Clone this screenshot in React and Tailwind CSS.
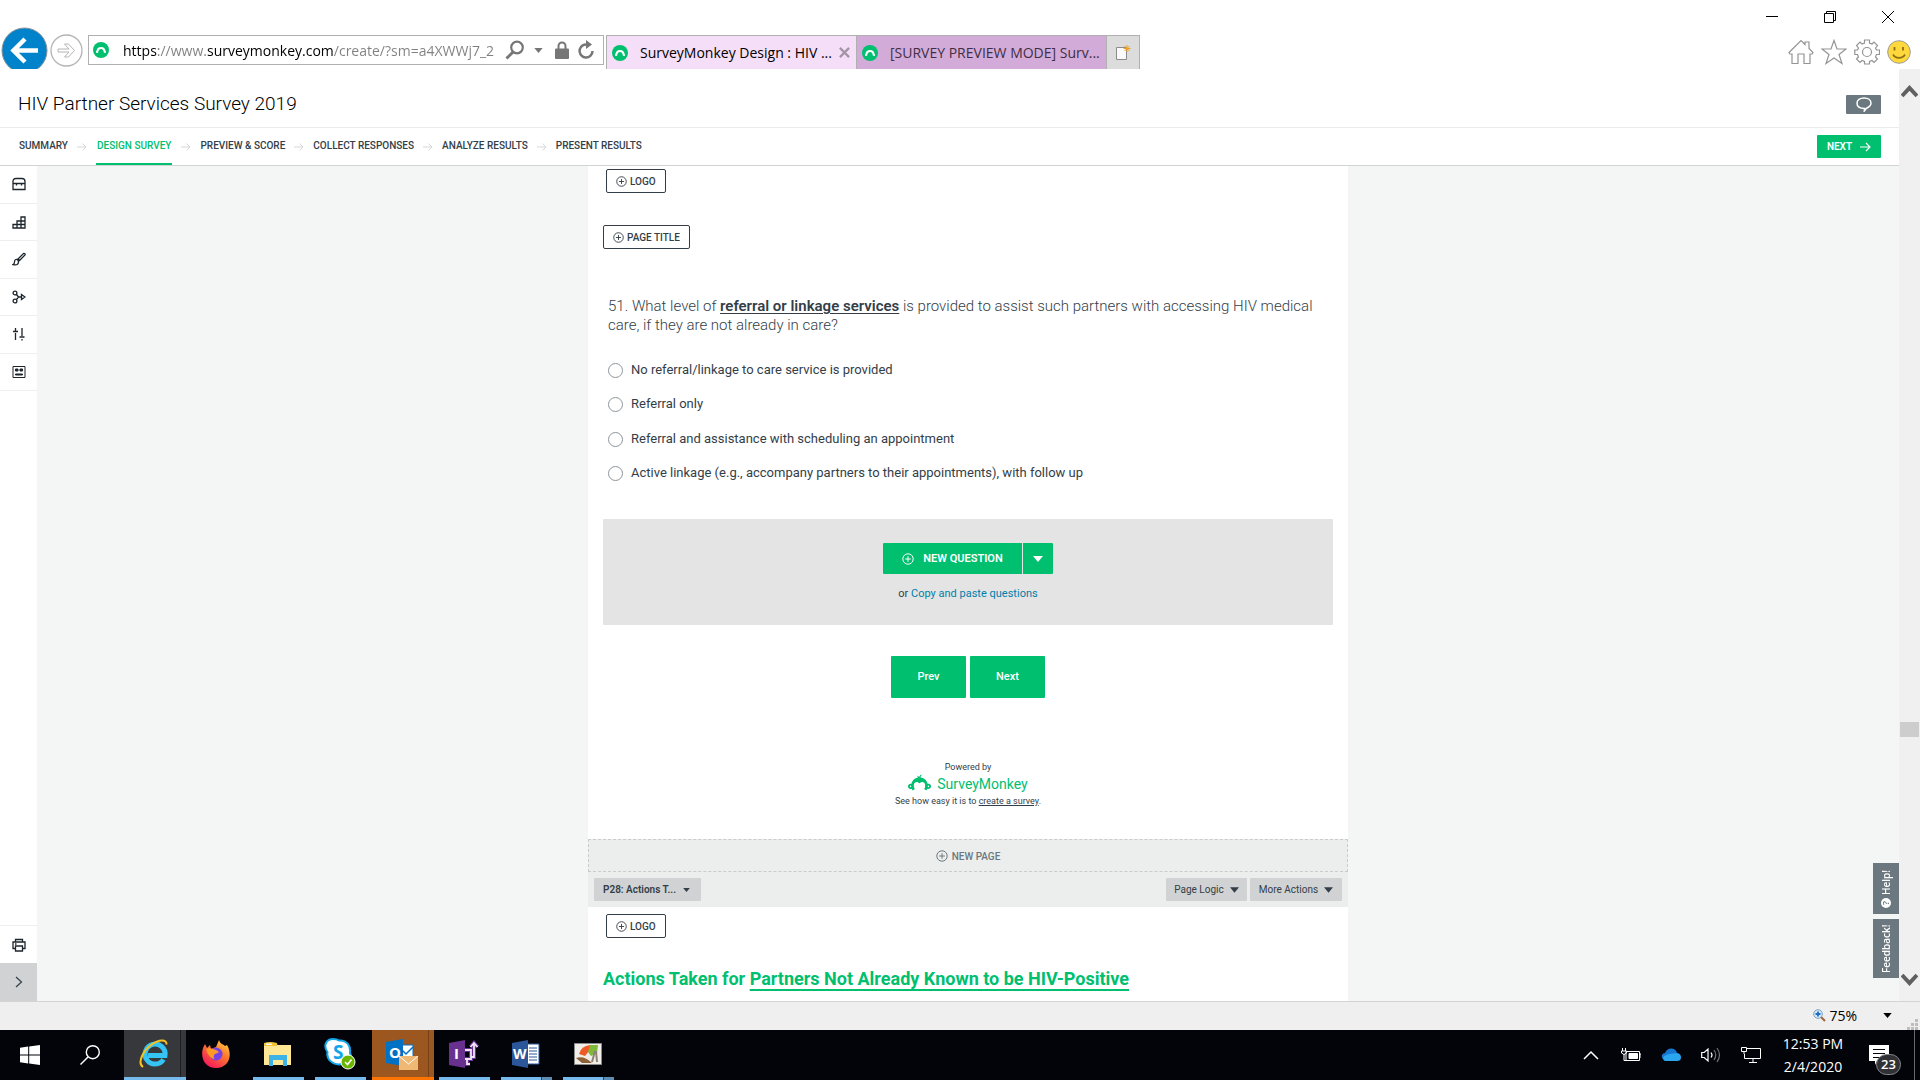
/**
 * Survey designer page, shown inside a desktop browser window.
 */

import React, { useState } from "react";
import { SiSurveymonkey } from "react-icons/si";

const NAV_STEPS = [
  "SUMMARY",
  "DESIGN SURVEY",
  "PREVIEW & SCORE",
  "COLLECT RESPONSES",
  "ANALYZE RESULTS",
  "PRESENT RESULTS",
];

const ANSWERS = [
  "No referral/linkage to care service is provided",
  "Referral only",
  "Referral and assistance with scheduling an appointment",
  "Active linkage (e.g., accompany partners to their appointments), with follow up",
];

/** Green round favicon used in the address bar and tabs. */
function Favicon() {
  return (
    <span className="flex size-4 shrink-0 items-center justify-center rounded-full bg-[#00bf6f] text-white">
      <svg viewBox="0 0 16 16" className="size-4" fill="none" stroke="currentColor" strokeWidth="2">
        <path d="M4.2 10.5C4.6 4.5 11.4 4.5 11.8 10.5" />
        <circle cx="4" cy="10" r="1" fill="currentColor" stroke="none" />
        <circle cx="12" cy="10" r="1" fill="currentColor" stroke="none" />
      </svg>
    </span>
  );
}

function CirclePlus({ className }) {
  return (
    <svg viewBox="0 0 12 12" className={className} fill="none" stroke="currentColor">
      <circle cx="6" cy="6" r="5.2" />
      <path d="M6 3.2v5.6M3.2 6h5.6" />
    </svg>
  );
}

function Caret({ className }) {
  return (
    <svg viewBox="0 0 10 6" className={className} fill="currentColor">
      <path d="M0 0h10L5 6z" />
    </svg>
  );
}

/** Outlined "add" button, e.g. + LOGO. */
function AddButton({ children, className }) {
  return (
    <button
      className={`flex h-6 items-center gap-[3px] rounded-[2px] border border-[#333e48] px-[9px] text-[10px] font-medium ${className}`}
    >
      <CirclePlus className="size-[11px]" />
      {children}
    </button>
  );
}

function BrowserBar() {
  const [url, setUrl] = useState("https://www.surveymonkey.com/create/?sm=a4XWWj7_2");

  return (
    <div className="flex h-[69px] shrink-0 items-end bg-white pl-px font-['Open_Sans',sans-serif]">
      <button aria-label="Back" className="h-[42px] w-[47px] shrink-0 overflow-hidden">
        <svg viewBox="0 0 47 42" className="h-[42px] w-[47px]">
          <circle cx="23.500" cy="23.500" r="22.500" fill="#0083ca" stroke="#8a9299" />
          <path d="M37 23.500H13M24 12 12.500 23.500 24 35" fill="none" stroke="#fff" strokeWidth="4.500" />
        </svg>
      </button>
      <button aria-label="Forward" className="mb-[2px] ml-[2px] size-[33px] shrink-0">
        <svg viewBox="0 0 33 33" fill="none" stroke="#b4b4b4">
          <circle cx="16.500" cy="16.500" r="15.500" strokeWidth="1.300" />
          <path d="M8 15h11l-4.500-5h4l6 6.500-6 6.500h-4l4.500-5H8z" />
        </svg>
      </button>

      {/* Address bar */}
      <div className="mb-1 ml-[5px] flex h-[30px] w-[516px] shrink-0 items-center border border-[#b0b0b0] pl-1 pr-2">
        <Favicon />
        <input
          aria-label="Address"
          value={url}
          onChange={(e) => setUrl(e.target.value)}
          className="ml-[14px] w-[384px] bg-[linear-gradient(90deg,#000_34px,#808080_34px,#808080_84px,#000_84px,#000_211px,#808080_211px)] bg-clip-text text-[14px] text-transparent outline-none"
        />
        <svg viewBox="0 0 20 20" className="size-5 shrink-0" fill="none" stroke="#767676">
          <circle cx="12" cy="7.500" r="5.800" strokeWidth="2.200" />
          <path d="M8 12 1.500 18.500" strokeWidth="3" />
        </svg>
        <Caret className="ml-[9px] h-[5px] w-[9px] shrink-0 text-[#767676]" />
        <svg viewBox="0 0 14 18" className="ml-3 h-[18px] w-[14px] shrink-0" fill="#767676">
          <rect y="7.500" width="14" height="10.500" rx="1" />
          <path d="M3.500 8V5a3.500 3.500 0 0 1 7 0v3" fill="none" stroke="#767676" strokeWidth="2" />
        </svg>
        <svg viewBox="0 0 18 20" className="ml-2 h-5 w-[18px] shrink-0" fill="none" stroke="#767676" strokeWidth="2.500">
          <path d="M11 4.800A6.500 6.500 0 1 0 15.500 11" />
          <path d="M9 0v9l6-4.500z" fill="#767676" stroke="none" />
        </svg>
      </div>

      {/* Tabs */}
      <div className="ml-[2px] flex h-[34px] min-w-0 border-l border-t border-[#b0b0b0] text-[14px]">
        <div className="flex w-[250px] items-center border-r border-[#b0b0b0] bg-[#f5dff8] pl-[5px]">
          <Favicon />
          <span className="ml-[12px] flex-1 whitespace-nowrap text-black">SurveyMonkey Design : HIV ...</span>
          <button aria-label="Close tab" className="mr-[6px]">
            <svg viewBox="0 0 12 12" className="size-[11px]" stroke="#a494a8" strokeWidth="2.500">
              <path d="m1 1 10 10M11 1 1 11" />
            </svg>
          </button>
        </div>
        <div className="flex w-[250px] items-center border-r border-[#b0b0b0] bg-[#d3abd9] pl-[5px]">
          <Favicon />
          <span className="ml-[12px] whitespace-nowrap text-[#402f44]">[SURVEY PREVIEW MODE] Surv...</span>
        </div>
        <button aria-label="New tab" className="flex w-[33px] items-center justify-center border-r border-[#b0b0b0] bg-[#dcdcdc]">
          <svg viewBox="0 0 16 16" className="size-4">
            <path d="M1.500 2.500h10v12h-10z" fill="#fafafa" stroke="#8b8b8b" />
            <path d="M12 0v7M8.500 3.500h7M9.500 1l5 5M14.500 1l-5 5" stroke="#f0a020" />
          </svg>
        </button>
      </div>

      {/* Window controls above the browser tools */}
      <div className="ml-auto flex h-full flex-col justify-between">
        <div className="flex h-9 items-center justify-end gap-[46px] pr-[26px]">
          <button aria-label="Minimize">
            <svg viewBox="0 0 12 12" className="size-3" stroke="#000"><path d="M0 5.500h12" /></svg>
          </button>
          <button aria-label="Restore">
            <svg viewBox="0 0 12 12" className="size-3" fill="none" stroke="#000">
              <path d="M.5 2.500h9v9h-9zM2.500 2.500v-2h9v9h-2" />
            </svg>
          </button>
          <button aria-label="Close">
            <svg viewBox="0 0 12 12" className="size-3" stroke="#000"><path d="m0 0 12 12M12 0 0 12" /></svg>
          </button>
        </div>
        <div className="flex h-9 items-center justify-end gap-[7px] pr-[9px]">
          <button aria-label="Home">
            <svg viewBox="0 0 26 26" className="size-[26px]" fill="none" stroke="#949494" strokeWidth="1.200">
              <path d="M1 13.500 13 1.500l4 4V3h4v6.500l4 4-1 1.500h-2v9.500h-6V15h-6v9.500H4V15H2z" />
            </svg>
          </button>
          <button aria-label="Favorites">
            <svg viewBox="0 0 26 26" className="size-[26px]" fill="none" stroke="#949494" strokeWidth="1.200">
              <path d="m13 1.500 3 8.500h9l-7 5.500 3 9L13 19l-8 5.500 3-9L1 10h9z" />
            </svg>
          </button>
          <button aria-label="Tools">
            <svg viewBox="0 0 26 26" className="size-[26px]" fill="none" stroke="#949494" strokeWidth="1.200">
              <path d="M10.500 1h5v3l2.500 1 2-2 3.500 3.500-2 2.500 1 2h3v4.500h-3l-1 2.500 2 2-3.500 3.500-2-2-2.500 1v2.500h-5V22.500L8 21.500l-2 2L2.500 20l2-2-1-2.500H.8V11h2.700l1-2-2-2.500L6 3l2 2 2.500-1z" />
              <circle cx="13" cy="13" r="4.500" />
            </svg>
          </button>
          <button aria-label="Send a smile">
            <svg viewBox="0 0 24 24" className="size-6" fill="none">
              <circle cx="12" cy="12" r="11.300" fill="#ffd93b" stroke="#9c9c9c" />
              <path d="M7.500 7v3.500M16 7v3.500" stroke="#8a7018" strokeWidth="1.800" />
              <path d="M6 14.500c2.500 4.500 9.500 4.500 12 0" stroke="#8a7018" strokeWidth="1.600" />
            </svg>
          </button>
        </div>
      </div>
    </div>
  );
}

function SurveyHeader() {
  return (
    <header className="shrink-0 bg-white">
      <div className="flex h-[59px] items-center justify-between border-b border-[#ebebeb] pl-[18px] pr-[18px] pt-3">
        <h1 className="text-[19px] font-light leading-6 text-black">HIV Partner Services Survey 2019</h1>
        <button aria-label="Comments" className="flex h-[19px] w-[35px] items-center justify-center rounded-[1px] bg-[#6b787f]">
          <svg viewBox="0 0 16 15" className="h-[15px] w-4" fill="none" stroke="#fff" strokeWidth="1.500">
            <path d="M8.500 11.500C4 11.500 1 9.500 1 6.300 1 3 4 1 8 1s7 2 7 5.200c0 2.500-2 3.800-4.500 5L8.300 14z" />
          </svg>
        </button>
      </div>
      <nav className="flex h-[38px] items-stretch border-b border-[#d0d2d3] pl-[19px] pr-[18px] text-[10px] font-medium">
        {NAV_STEPS.map((step, i) => (
          <React.Fragment key={step}>
            {i > 0 && (
              <svg viewBox="0 0 10 8" className="mx-[9px] h-2 w-[10px] shrink-0 self-center" fill="none" stroke="#d5d7d8">
                <path d="M0 4h9M5.500.5 9 4 5.500 7.500" />
              </svg>
            )}
            {step === "DESIGN SURVEY" ? (
              <a href="#design" className="flex items-center whitespace-nowrap border-b-2 border-[#00bf6f] px-px text-[#00bf6f]">
                {step}
              </a>
            ) : (
              <a href="#step" className="flex items-center whitespace-nowrap pb-[2px]">{step}</a>
            )}
          </React.Fragment>
        ))}
        <button className="ml-auto flex h-[23px] w-16 items-center justify-center gap-2 self-center rounded-[1px] bg-[#00bf6f] font-semibold text-white">
          NEXT
          <svg viewBox="0 0 11 10" className="h-[10px] w-[11px]" fill="none" stroke="currentColor" strokeWidth="1.200">
            <path d="M0 5h10M6 1l4 4-4 4" />
          </svg>
        </button>
      </nav>
    </header>
  );
}

// Tool icons of the left rail, top to bottom
const TOOLS = [
  {
    label: "Question bank",
    icon: <path d="M1 6.500V4.500Q1 1.500 4 1.500h6q3 0 3 3v2M.7 6.500h12.600M1 6.500v6h12v-6M4.500 6.500v2M9.500 6.500v2" />,
  },
  {
    label: "Builder",
    icon: <path d="M1 9.500h12v3.500H1zM5 13V6h8v7M9 13V2h4v4M9 2v4M1 9.500h12" />,
  },
  {
    label: "Appearance",
    icon: <path d="M6 7 11.500 1.500q2-.5 1.500 1.500L7.500 8.500zM5.500 7.500q-3-.5-3 2.500 0 2-1.500 2.500 5.500 1.500 5.500-3z" />,
  },
  {
    label: "Logic",
    icon: (
      <>
        <circle cx="3" cy="3" r="1.900" />
        <circle cx="3" cy="11" r="1.900" />
        <path d="M4.500 4.500 6.500 7h3.500M4.500 9.500l2-2.500M9.500 4.500 13 7 9.500 9.500z" />
      </>
    ),
  },
  {
    label: "Options",
    icon: <path d="M3.500 1v3M1 4.500h5M3.500 6v7M10 1v8M7.500 10h5M10 12v1.500" />,
  },
  {
    label: "Format",
    icon: (
      <>
        <path d="M1 1.500h12v11H1z" strokeWidth="1" />
        <path d="M3.500 4h2.500v2H3.500zM8 4h2.500v2H8zM3.500 9h7v1h-7z" fill="currentColor" strokeWidth="1" />
      </>
    ),
  },
];

function ToolRail() {
  return (
    <aside className="flex w-[37px] shrink-0 flex-col bg-white text-[#1c252c]">
      <div className="flex h-[225px] flex-col">
        {TOOLS.map((tool) => (
          <button key={tool.label} aria-label={tool.label} className="flex flex-1 items-center justify-center border-b border-[#edeeee]">
            <svg viewBox="0 0 14 14" className="size-[14px]" fill="none" stroke="currentColor" strokeWidth="1.300">
              {tool.icon}
            </svg>
          </button>
        ))}
      </div>
      <button aria-label="Print" className="mt-auto flex h-[38px] items-center justify-center border-t border-[#edeeee]">
        <svg viewBox="0 0 14 14" className="size-[14px]" fill="none" stroke="currentColor" strokeWidth="1.300">
          <path d="M3.500 4V1.500h7V4M3.500 10.500H1V4h12v6.500h-2.500M3.500 8h7v5h-7zM3 6h1.500" />
        </svg>
      </button>
      <button aria-label="Expand" className="flex h-[38px] items-center justify-center bg-[#d0d2d3]">
        <svg viewBox="0 0 8 12" className="h-3 w-2" fill="none" stroke="#333e48" strokeWidth="1.200">
          <path d="m1 1 5.500 5L1 11" />
        </svg>
      </button>
    </aside>
  );
}

function SurveyPage() {
  const [answer, setAnswer] = useState("");

  return (
    <div className="mx-auto w-[760px] bg-white">
      <div className="px-[15px] pb-[29px] pt-[3px]">
        <AddButton className="ml-[3px]">LOGO</AddButton>
        <AddButton className="mt-8">PAGE TITLE</AddButton>

        <fieldset className="mt-12 pl-[5px]">
          <legend className="text-[15px] font-light leading-[19px]">
            51. What level of <b className="font-semibold underline underline-offset-2">referral or linkage services</b> is
            provided to assist such partners with accessing HIV medical care, if they are not already in care?
          </legend>
          <div className="mt-[18px] flex h-[138px] flex-col">
            {ANSWERS.map((text) => (
              <label key={text} className="flex flex-1 items-center gap-2 text-[13px]">
                <input
                  type="radio"
                  name="linkage"
                  checked={answer === text}
                  onChange={() => setAnswer(text)}
                  className="size-[15px] appearance-none rounded-full border border-[#8e959a] bg-white checked:bg-[#00bf6f]"
                />
                <span className="pb-[2px]">{text}</span>
              </label>
            ))}
          </div>
        </fieldset>

        {/* New question block */}
        <div className="mt-7 flex h-[106px] flex-col items-center rounded-[1px] bg-[#e4e4e4] pt-6">
          <div className="flex h-[31px] gap-px text-[11px] font-semibold text-white">
            <button className="flex w-[139px] items-center justify-center gap-[9px] rounded-l-[1px] bg-[#00bf6f] pt-px">
              <CirclePlus className="size-3" />
              NEW QUESTION
            </button>
            <button aria-label="Question types" className="flex w-[30px] items-center justify-center rounded-r-[1px] bg-[#00bf6f]">
              <Caret className="h-[6px] w-[10px]" />
            </button>
          </div>
          <p className="mt-[11px] text-[11px] leading-[18px]">
            or <a href="#copy" className="text-[#007faa]">Copy and paste questions</a>
          </p>
        </div>

        <div className="mt-[31px] flex justify-center gap-1 text-[11px] font-medium text-white">
          <button className="h-[42px] w-[75px] rounded-[1px] bg-[#00bf6f] pt-px">Prev</button>
          <button className="h-[42px] w-[75px] rounded-[1px] bg-[#00bf6f] pt-px">Next</button>
        </div>

        <div className="mt-[60px] flex flex-col items-center text-[9px] leading-[18px]">
          <span>Powered by</span>
          <a href="#home" className="flex h-4 items-center gap-[6px] text-[#00bf6f]">
            <SiSurveymonkey className="mb-1 size-[23px]" />
            <span className="text-[14px]">
              SurveyMonkey
            </span>
          </a>
          <span>
            See how easy it is to <a href="#create" className="underline">create a survey</a>.
          </span>
        </div>
      </div>

      <button className="flex h-[33px] w-full items-center justify-center gap-1 border border-dashed border-[#c9cbcc] bg-[#eceeed] pt-px text-[10px] font-medium text-[#6b787f]">
        <CirclePlus className="size-3" />
        NEW PAGE
      </button>
      <div className="flex h-[35px] items-center gap-[3px] bg-[#eceeed] px-[6px] text-[10px]">
        <div className="relative mr-auto">
          <select aria-label="Page" className="h-[23px] w-[107px] appearance-none rounded-[1px] bg-[#d0d2d3] pl-[9px] font-semibold">
            <option>P28: Actions T...</option>
          </select>
          <Caret className="pointer-events-none absolute right-[11px] top-[10px] h-1 w-[7px]" />
        </div>
        <button className="flex h-[23px] w-[81px] items-center justify-center gap-[6px] rounded-[1px] bg-[#d0d2d3]">
          Page Logic
          <Caret className="h-[6px] w-[9px]" />
        </button>
        <button className="flex h-[23px] w-[92px] items-center justify-center gap-[6px] rounded-[1px] bg-[#d0d2d3]">
          More Actions
          <Caret className="h-[6px] w-[9px]" />
        </button>
      </div>

      <div className="px-[15px] pb-10 pt-[7px]">
        <AddButton className="ml-[3px]">LOGO</AddButton>
        <h2 className="mt-[29px] text-[18px] font-bold leading-6 text-[#00bf6f]">
          Actions Taken for{" "}
          <span className="underline decoration-2 underline-offset-4">Partners Not Already Known to be HIV-Positive</span>
        </h2>
      </div>
    </div>
  );
}

/** Help and feedback tabs glued to the right edge of the page. */
function SideTabs() {
  return (
    <div className="absolute bottom-[23px] right-0 flex flex-col gap-[5px] font-['Open_Sans',sans-serif] text-[10px] font-semibold text-white">
      <button className="flex h-[51px] w-[26px] rotate-180 items-center justify-center gap-[3px] bg-[#6b787f] [writing-mode:vertical-rl]">
        <span className="flex size-[10px] items-center justify-center rounded-full bg-white text-[9px] text-[#6b787f]">?</span>
        Help!
      </button>
      <button className="h-[59px] w-[26px] rotate-180 bg-[#6b787f] [writing-mode:vertical-rl]">Feedback!</button>
    </div>
  );
}

function ScrollBar() {
  return (
    <div className="flex w-[21px] shrink-0 flex-col items-center bg-[#f0f0f0] pb-[15px] pt-4">
      <svg viewBox="0 0 17 13" className="h-[13px] w-[17px]" fill="none" stroke="#606060" strokeWidth="4">
        <path d="m1 11 7.500-8 7.500 8" />
      </svg>
      <div className="flex-[625]" />
      <div className="h-[15px] w-[19px] bg-[#cdcdcd]" />
      <div className="flex-[236]" />
      <svg viewBox="0 0 17 13" className="h-[13px] w-[17px]" fill="none" stroke="#606060" strokeWidth="4">
        <path d="m1 2 7.500 8L16 2" />
      </svg>
    </div>
  );
}

function StatusBar() {
  return (
    <div className="flex h-[29px] shrink-0 items-center justify-end border-t border-[#d4d4d4] bg-[#efefef] font-['Open_Sans',sans-serif]">
      <button className="flex items-center gap-[3px] pb-px text-[14px] text-black">
        <svg viewBox="0 0 13 13" className="size-[13px]" fill="none">
          <path d="m8 8 4 4" stroke="#a06a40" strokeWidth="2.200" />
          <circle cx="5" cy="5" r="4.300" fill="#d9ecfb" stroke="#7d9db8" />
          <path d="M5 2.500v5M2.500 5h5" stroke="#1b6fc8" strokeWidth="1.800" />
        </svg>
        75%
        <Caret className="ml-[23px] h-[5px] w-[9px]" />
      </button>
      <svg viewBox="0 0 11 11" className="ml-[15px] mr-[2px] mt-4 size-[11px]" fill="#bdbdbd">
        <path d="M8 0h3v3H8zM8 4h3v3H8zM8 8h3v3H8zM4 4h3v3H4zM4 8h3v3H4zM0 8h3v3H0z" />
      </svg>
    </div>
  );
}

/** One taskbar slot, with an optional running indicator under the icon. */
function TaskItem({ label, children, running, multi, tile }) {
  return (
    <button aria-label={label} className={`relative flex h-full w-[62px] items-center justify-center pr-[2px] ${tile || "pb-[2px]"}`}>
      {children}
      {running && (
        <span className="absolute bottom-0 left-[5px] flex h-[3px] w-[51px] bg-[#76b9ed]">
          {multi && <span className="ml-auto w-[11px] border-l border-[#2d4558] bg-[#5d8db5]" />}
        </span>
      )}
    </button>
  );
}

function Taskbar() {
  return (
    <div className="flex h-[50px] shrink-0 items-center bg-[#02040a] font-['Open_Sans',sans-serif] text-white">
      <button aria-label="Start" className="flex w-[60px] justify-center">
        <svg viewBox="0 0 20 20" className="size-5" fill="#fff">
          <path d="M0 2.800 8.200 1.600v7.900H0zM9.200 1.500 20 0v9.500H9.200zM0 10.500h8.200v7.900L0 17.200zM9.200 10.500H20V20L9.200 18.500z" />
        </svg>
      </button>
      <button aria-label="Search" className="mr-[4px] flex w-[60px] justify-center">
        <svg viewBox="0 0 20 20" className="size-5" fill="none" stroke="#fff" strokeWidth="1.400">
          <circle cx="12.800" cy="7.200" r="6.500" />
          <path d="M8 12 .5 19.500" />
        </svg>
      </button>

      <TaskItem label="Internet Explorer" tile="border-b-[3px] border-[#76b9ed] bg-[#37383c]">
        <svg viewBox="0 0 30 30" className="size-[30px]" fill="none">
          <path d="M24.500 20.500A10 10 0 1 1 26 16.500H9" stroke="#35c3f3" strokeWidth="5" />
          <path d="M4 28C-2 24 4 12 12 6S28 0 27.500 5.500" stroke="#f3c321" strokeWidth="2" />
        </svg>
        <span className="absolute inset-y-0 right-[5px] w-px bg-[#1d1e21]" />
      </TaskItem>
      <TaskItem label="Firefox">
        <svg viewBox="0 0 30 30" className="size-[30px]">
          <defs>
            <linearGradient id="fox" x1="1" y1="0" x2="0.300" y2="1">
              <stop offset="0" stopColor="#ffe545" />
              <stop offset="0.450" stopColor="#ff7b2c" />
              <stop offset="1" stopColor="#f5195c" />
            </linearGradient>
          </defs>
          <path d="M18 1c1 4 4 4 6 6l2-1c6 10 2 23-11 23C4 29-1 19 2 9l2-4 2 4 3-3 1 4 5-2z" fill="url(#fox)" />
          <circle cx="15" cy="15" r="6.500" fill="#7542e5" />
          <path d="M5 10c4-2 7 0 10 1l3 2c-2 2-4 1-5 3-1 3 1 4 1 4-4 0-8-5-9-10z" fill="#ff9a26" />
        </svg>
      </TaskItem>
      <TaskItem label="File Explorer" running>
        <svg viewBox="0 0 28 24" className="h-6 w-7">
          <path d="M0 1h11l3 2h13v20H0z" fill="#ffe796" />
          <path d="M0 1q6-2 13 0v3H0z" fill="#f5c433" />
          <path d="M2 1.500h6v1.500H2z" fill="#fff" />
          <path d="M5 24V13h18v11h-4v-6H9v6z" fill="#3cb2e6" />
        </svg>
      </TaskItem>
      <TaskItem label="Skype" running>
        <svg viewBox="0 0 32 32" className="size-8">
          <path d="M9 1q4 0 6 1.500C23 2 27 8 26 15c4 8-3 13-8 11C9 28 2 21 3.500 14-1 8 2 1 9 1z" fill="#fff" stroke="#12a5e8" strokeWidth="2" />
          <text x="9" y="21" fontSize="19" fontWeight="700" fill="#12a5e8">S</text>
          <circle cx="24" cy="24" r="7" fill="#6bb700" stroke="#fff" />
          <path d="m21 24 2.500 2.500 4-5" fill="none" stroke="#fff" strokeWidth="1.600" />
        </svg>
      </TaskItem>
      <TaskItem label="Outlook" tile="border-b-[3px] border-[#ff7300] bg-[#9c561f]">
        <svg viewBox="0 0 32 32" className="size-8">
          <path d="M15 7h12v12H15z" fill="#fff" stroke="#0072c6" />
          <path d="m16 12 4 4 7-7" fill="none" stroke="#0072c6" strokeWidth="1.500" />
          <path d="M0 4 17 1v27L0 25z" fill="#0072c6" />
          <text x="3" y="20" fontSize="15" fontWeight="700" fill="#fff">O</text>
          <path d="M13 18h19v14H13z" fill="#f0b875" />
          <path d="m13 18 9.500 8 9.500-8" fill="none" stroke="#fff" />
        </svg>
        <span className="absolute inset-y-0 right-[5px] w-px bg-[#75411a]" />
      </TaskItem>
      <TaskItem label="InfoPath" running>
        <svg viewBox="0 0 30 28" className="h-7 w-[30px]">
          <path d="M0 3 16 0v28L0 25z" fill="#68318f" />
          <text x="5" y="19" fontSize="15" fontWeight="700" fill="#fff">I</text>
          <path d="M16 10h6v9h-6M18 19v5h3M22 17h3V4M21.500 7 25 3l3.500 4" fill="none" stroke="#68318f" strokeWidth="4" />
          <path d="M16 10h6v9h-6M18 19v5h3M22 17h3V4M21.500 7 25 3l3.500 4" fill="none" stroke="#efe6f5" strokeWidth="1.800" />
        </svg>
      </TaskItem>
      <TaskItem label="Word" running multi>
        <svg viewBox="0 0 28 28" className="size-7">
          <path d="M14 4h13v20H14z" fill="#fff" stroke="#2b579a" />
          <path d="M17 8h8M17 11h8M17 14h8M17 17h8M17 20h8" stroke="#2b579a" />
          <path d="M0 3 16 0v28L0 25z" fill="#2b579a" />
          <text x="1" y="19" fontSize="14" fontWeight="700" fill="#fff">W</text>
        </svg>
      </TaskItem>
      <TaskItem label="Picture viewer" running multi>
        <svg viewBox="0 0 28 22" className="h-[22px] w-7">
          <path d="M.5.500h27v21H.5z" fill="#f1eee8" stroke="#8b8b8b" />
          <path d="M5 11Q7 3 16 2l3 1-8 10z" fill="#f05a28" />
          <path d="M16 2h8l-1 8-6 3-3-4z" fill="#7fb83a" />
          <path d="M2 15q8-3 16 5H8z" fill="#8d6239" />
          <path d="m18 19 3-11M23 19l-1-11" stroke="#8e8378" strokeWidth="2" />
        </svg>
      </TaskItem>

      {/* System tray */}
      <div className="ml-auto flex h-full items-center gap-5 pb-px">
        <svg viewBox="0 0 16 10" className="mr-[2px] h-[10px] w-4" fill="none" stroke="#fff" strokeWidth="1.500">
          <path d="m1 9 7-7 7 7" />
        </svg>
        <svg viewBox="0 0 20 14" className="h-[14px] w-5" fill="none" stroke="#fff">
          <path d="M5 3.500h13.500v9H5zM18.500 6h1.500v4" />
          <path d="M8 5.500h8.500v5H8z" fill="#fff" />
          <path d="M1.500 0v3M4.500 0v3M.5 3h5v2q-2.500 3-5 0zM3 6v6.500h3" />
        </svg>
        <svg viewBox="0 0 20 13" className="h-[13px] w-5">
          <path d="M4 12Q0 11 1 7q1-2 3-2 2-5 7-4.500 4 .5 5 4.500l-7 5z" fill="#1477d2" />
          <path d="M4 13Q1 12 3 8l5-2 8-1q4 .5 4 4.500 0 3.500-4 3.500z" fill="#2ba5ed" />
        </svg>
        <svg viewBox="0 0 20 18" className="h-[18px] w-5" fill="none" stroke="#fff" strokeWidth="1.200">
          <path d="M.7 6.500h2.500L7 3v12l-3.800-3.500H.7zM10 6.500q2 2.500 0 5" />
          <path d="M13 4q3.500 5 0 10M16 2q5 7 0 14" stroke="#70747b" />
        </svg>
        <svg viewBox="0 0 20 16" className="h-4 w-5" fill="none" stroke="#fff">
          <path d="M6 1.500h13.500v10H3.500V7M.5.500h5v4h-5zM3 4.500V7M12 11.500V15M8 15.500h8" />
        </svg>
        <div className="flex w-[64px] flex-col items-center text-[14px] leading-[23px]">
          <span className="whitespace-nowrap">12:53 PM</span>
          <span>2/4/2020</span>
        </div>
        <button aria-label="Notifications" className="relative h-full w-[49px]">
          <svg viewBox="0 0 20 20" className="absolute left-1 top-[15px] size-5">
            <path d="M0 0h20v16H8l-2 4v-4H0z" fill="#fff" />
            <path d="M4 4.500h12M4 8.500h12M4 12.500h9" stroke="#02040a" />
          </svg>
          <span className="absolute left-[11px] top-[24px] flex h-[21px] w-[25px] items-center justify-center rounded-full border border-[#85888c] bg-[#303134] text-[13px] font-semibold">
            23
          </span>
        </button>
      </div>
      <span className="h-full w-[6px] border-l border-[#66696e]" />
    </div>
  );
}

function App() {
  return (
    <div className="flex h-screen flex-col overflow-hidden bg-white font-[Roboto,sans-serif] text-[#333e48]">
      <BrowserBar />
      <div className="flex min-h-0 flex-1">
        <div className="relative flex min-w-0 flex-1 flex-col">
          <SurveyHeader />
          <div className="flex min-h-0 flex-1">
            <ToolRail />
            <main className="min-w-0 flex-1 overflow-hidden bg-[#f4f5f5]">
              <SurveyPage />
            </main>
          </div>
          <SideTabs />
        </div>
        <ScrollBar />
      </div>
      <StatusBar />
      <Taskbar />
    </div>
  );
}

export default App;
